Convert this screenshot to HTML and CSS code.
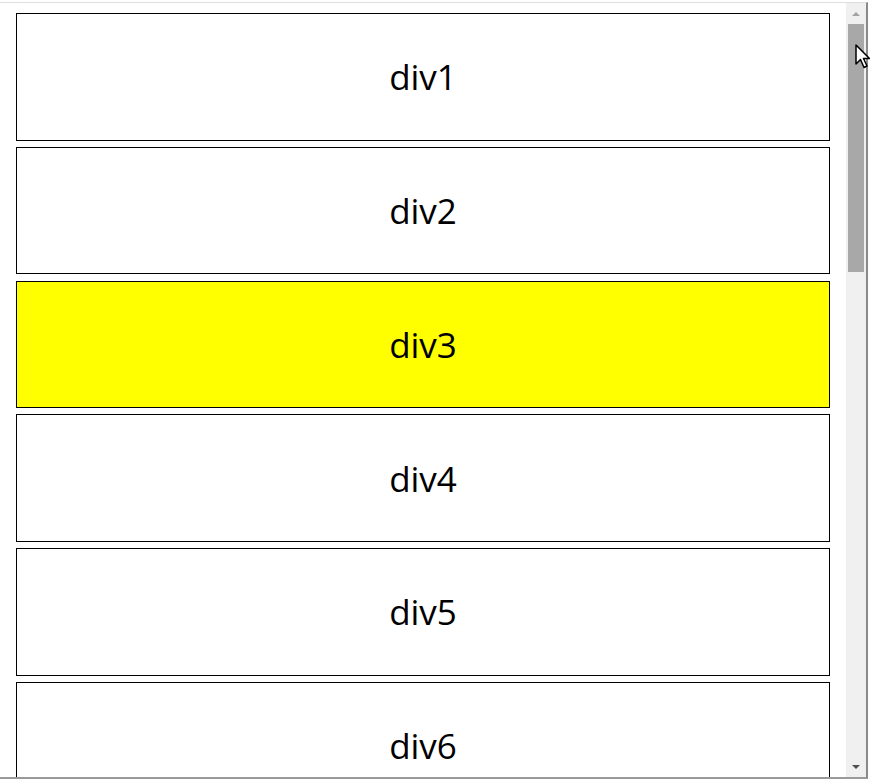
FILE: index.html
```html
<!DOCTYPE html>
<html>
<head>
    <title>divs</title>
    <link rel="stylesheet" href="styles.css">
</head>
<body>
    <div class="window">
        <div class="page">
            <div class="box">div1</div>
            <div class="box">div2</div>
            <div class="box active">div3</div>
            <div class="box">div4</div>
            <div class="box">div5</div>
            <div class="box">div6</div>
        </div>
        <div class="scrollbar">
            <div class="arrow up"></div>
            <div class="track">
                <div class="thumb"></div>
            </div>
            <div class="arrow down"></div>
        </div>
    </div>
    <!-- mouse pointer sitting over the scrollbar -->
    <svg class="cursor" width="18" height="26" viewBox="0 0 18 26">
        <path d="M1 1 L1 20 L5.5 15.5 L9 23.5 L12 22 L8.5 14.5 L14.5 14.5 Z" fill="#fff" stroke="#000" stroke-width="1.5" stroke-linejoin="round"/>
    </svg>
</body>
</html>
```
FILE: styles.css
```css
html, body {
    margin: 0;
    height: 100%;
    overflow: hidden;
    background: #fff;
}
.window {
    display: flex;
    width: 866px;
    height: 774px;
    margin-top: 2px;
    border-top: 1px solid #dedede;
    border-right: 2px solid #8a8a8a;
    border-bottom: 2px solid #9a9a9a;
}
.page {
    flex: 1;
    overflow: hidden;
    padding: 10px 16px 0 16px;
}
.box {
    height: 125.5px;
    margin-bottom: 6.25px;
    border: 1px solid #000;
    display: flex;
    align-items: center;
    justify-content: center;
    font-family: "Open Sans", "Noto Sans", sans-serif;
    font-size: 35px;
    color: #000;
}
.active {
    background: #ffff00;
}
.scrollbar {
    width: 20px;
    background: #f0f0f0;
    display: flex;
    flex-direction: column;
}
.arrow {
    height: 21px;
    display: flex;
    align-items: center;
    justify-content: center;
}
.arrow.up::before {
    content: "";
    border-left: 4px solid transparent;
    border-right: 4px solid transparent;
    border-bottom: 4px solid #a3a3a3;
}
.arrow.down::before {
    content: "";
    border-left: 4px solid transparent;
    border-right: 4px solid transparent;
    border-top: 4px solid #505050;
}
.track {
    flex: 1;
    padding: 0 2px;
}
.thumb {
    height: 248px;
    background: #a8a8a8;
}
.cursor {
    position: absolute;
    left: 855px;
    top: 44px;
}
```
